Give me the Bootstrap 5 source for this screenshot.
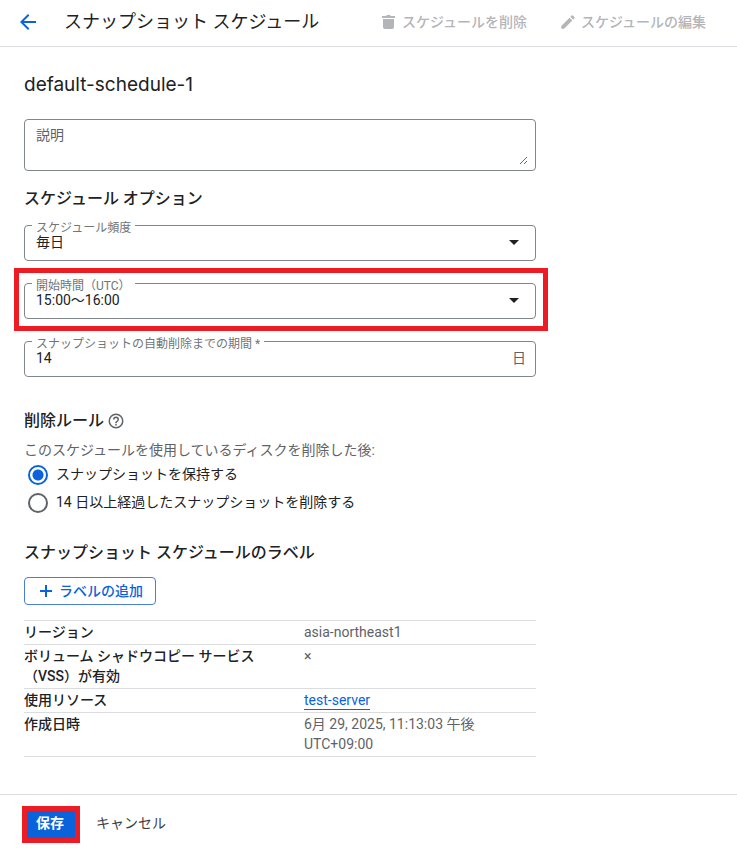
<!DOCTYPE html>
<html lang="ja">
<head>
<meta charset="utf-8">
<meta name="viewport" content="width=device-width, initial-scale=1">
<title>スナップショット スケジュール</title>
<link href="https://cdn.jsdelivr.net/npm/bootstrap@5.3.0/dist/css/bootstrap.min.css" rel="stylesheet">
<style>
  body { font-family: Roboto, "Noto Sans CJK JP", sans-serif; font-size: 14px; line-height: 20px; color: #202124; background: #fff; }
  svg { display: block; fill: currentColor; flex: none; }
  .ink-blue { color: #0b63dc; }
  .ink-muted { color: #5f6368; }

  .page-bar { padding: 10px 31px 12px 16px; border-bottom: 1px solid #dadce0; }
  .page-title { font-size: 18px; line-height: 24px; font-weight: 400; margin: 0 0 0 24px; }
  .bar-actions { gap: 32px; }
  .plain-btn { border: 0; background: none; padding: 0; display: flex; align-items: center; }
  .plain-btn:disabled { color: #b4b5b8; font-weight: 500; gap: 4px; }
  .cancel-btn { padding-bottom: 4px; color: #3c4043; }

  .form-area { max-width: 560px; padding: 26px 24px 37px; }
  .schedule-name { font: 400 19px/24px Inter, sans-serif; margin: 0 0 22px; }
  .section-title { font-size: 16px; line-height: 24px; font-weight: 500; margin: 0; }
  .option-title { margin: 16px 0 14px; }

  .field { position: relative; }
  .field .form-control, .field .form-select { border: 1px solid #80868b; border-radius: 4px; font-size: 14px; line-height: 20px; color: #202124; padding: 6px 11px 8px; height: 36px; background-image: none; }
  .area-box { border: 1px solid #80868b; border-radius: 4px; padding: 5px 7px; }
  .area-box textarea.form-control { display: block; border: 0; border-radius: 0; height: 40px; min-height: 40px; padding: 0 4px; }
  .field textarea::placeholder { color: #5f6368; }
  .notch { position: absolute; top: -5px; left: 8px; padding: 0 4px; background: #fff; color: #70757a; font-size: 12px; line-height: 16px; height: 12px; }
  .pick::after { content: ""; position: absolute; right: 17px; top: 15px; border: 5px solid transparent; border-top-color: #202124; border-bottom: 0; pointer-events: none; }
  .marked::before { content: ""; position: absolute; inset: -15px -12px -12px -10px; border: 5px solid #ed1c24; pointer-events: none; }
  .field-stack { gap: 22px; }
  .unit { position: absolute; right: 10px; top: 7px; }

  .rule-title { gap: 3px; margin-top: 32px; }
  .rule-note { margin: 7px 0 1px; }
  .radio-row { height: 28px; padding-left: 4px; gap: 8px; }
  .radio-row label { padding-bottom: 2px; }
  .radio-row .form-check-input { width: 20px; height: 20px; margin: 0; border: 2px solid #5f6368; background: #fff; }
  .radio-row .form-check-input:checked { border-color: #0b63dc; background: radial-gradient(circle, #0b63dc 5px, #fff 6px); }

  .label-title { margin: 24px 0 12px; }
  .btn-label { --bs-btn-color: #0b63dc; --bs-btn-border-color: #4a7fd6; --bs-btn-font-size: 14px; --bs-btn-font-weight: 500; --bs-btn-line-height: 20px; --bs-btn-padding-x: 12px; --bs-btn-padding-y: 3px; --bs-btn-border-radius: 4px; gap: 4px; }
  .facts { line-height: 20px; border-top: 1px solid #dadce0; color: inherit; margin: 15px 0 0; table-layout: fixed; }
  .facts > tbody > tr > * { padding: 1px 50px 2px 0; border-bottom: 1px solid #dadce0; color: inherit; vertical-align: top; }
  .facts > tbody > tr > th { width: 280px; font-weight: 500; padding-right: 40px; }
  .facts > tbody > tr > td { color: #5f6368; }
  .facts a { display: inline-block; line-height: 18px; color: #0b63dc; text-decoration: none; border-bottom: 1px solid #0b63dc; }

  .form-foot { border-top: 1px solid #dadce0; padding: 11px 22px 5px; gap: 16px; }
  .btn-save { border: 5px solid #ed1c24; border-radius: 0; background: #0b63dc; color: #fff; font-size: 14px; font-weight: 700; line-height: 20px; padding: 2px 11px 5px 9px; }
</style>
</head>
<body>
<header class="page-bar d-flex align-items-center">
  <a href="#" class="ink-blue" aria-label="戻る"><svg width="24" height="24" viewBox="0 0 24 24"><path d="M20 11H7.8l5.6-5.6L12 4l-8 8 8 8 1.4-1.4L7.8 13H20z"/></svg></a>
  <h1 class="page-title">スナップショット スケジュール</h1>
  <div class="bar-actions d-flex ms-auto">
    <button class="plain-btn" disabled><svg width="18" height="18" viewBox="0 0 18 18"><path d="M2 3h4l1-1h3l1 1h4v2H2zM3 6h11v8q0 2-2 2H5q-2 0-2-2z"/></svg>スケジュールを削除</button>
    <button class="plain-btn" disabled><svg width="18" height="18" viewBox="0 0 24 24"><path d="M3 17.200V21h3.800L17.800 9.900l-3.700-3.700zM20.700 7a1 1 0 0 0 0-1.400l-2.300-2.300a1 1 0 0 0-1.400 0l-1.900 1.800 3.800 3.800z"/></svg>スケジュールの編集</button>
  </div>
</header>

<main>
  <form>
    <div class="form-area">
      <h2 class="schedule-name">default-schedule-1</h2>
      <div class="field area-box"><textarea class="form-control" aria-label="説明" placeholder="説明"></textarea></div>

      <h3 class="section-title option-title">スケジュール オプション</h3>
      <div class="field-stack d-flex flex-column">
        <div class="field pick">
          <select class="form-select" id="freq"><option>毎日</option></select>
          <label class="notch" for="freq">スケジュール頻度</label>
        </div>
        <div class="field pick marked">
          <select class="form-select" id="start"><option>15:00～16:00</option></select>
          <label class="notch" for="start">開始時間（UTC）</label>
        </div>
        <div class="field">
          <input class="form-control" id="keep" type="text" value="14">
          <label class="notch" for="keep">スナップショットの自動削除までの期間 *</label>
          <span class="unit ink-muted">日</span>
        </div>
      </div>

      <div class="rule-title d-flex align-items-center">
        <h3 class="section-title">削除ルール</h3>
        <svg class="ink-muted" width="18" height="18" viewBox="0 0 24 24"><path d="M11 18h2v-2h-2zM12 2a10 10 0 1 0 0 20 10 10 0 0 0 0-20zm0 18a8 8 0 1 1 0-16 8 8 0 0 1 0 16zm0-14a4 4 0 0 0-4 4h2a2 2 0 1 1 4 0c0 2-3 1.800-3 5h2c0-2.200 3-2.500 3-5a4 4 0 0 0-4-4z"/></svg>
      </div>
      <p class="rule-note ink-muted">このスケジュールを使用しているディスクを削除した後:</p>
      <div class="radio-row d-flex align-items-center"><input class="form-check-input" type="radio" name="rule" id="r1" checked><label for="r1">スナップショットを保持する</label></div>
      <div class="radio-row d-flex align-items-center"><input class="form-check-input" type="radio" name="rule" id="r2"><label for="r2">14 日以上経過したスナップショットを削除する</label></div>

      <h3 class="section-title label-title">スナップショット スケジュールのラベル</h3>
      <button type="button" class="btn btn-label d-inline-flex align-items-center"><svg width="18" height="18" viewBox="0 0 18 18"><path d="M8 3h2v5h5v2h-5v5H8v-5H3V8h5z"/></svg>ラベルの追加</button>

      <table class="table facts">
        <tbody>
          <tr><th scope="row">リージョン</th><td>asia-northeast1</td></tr>
          <tr><th scope="row">ボリューム シャドウコピー サービス（VSS）が有効</th><td>×</td></tr>
          <tr><th scope="row">使用リソース</th><td><a href="#">test-server</a></td></tr>
          <tr><th scope="row">作成日時</th><td>6月 29, 2025, 11:13:03 午後 UTC+09:00</td></tr>
        </tbody>
      </table>
    </div>
    <div class="form-foot d-flex align-items-center">
      <button type="submit" class="btn-save">保存</button>
      <button type="button" class="plain-btn cancel-btn">キャンセル</button>
    </div>
  </form>
</main>
<script src="https://cdn.jsdelivr.net/npm/bootstrap@5.3.0/dist/js/bootstrap.bundle.min.js"></script>
</body>
</html>
